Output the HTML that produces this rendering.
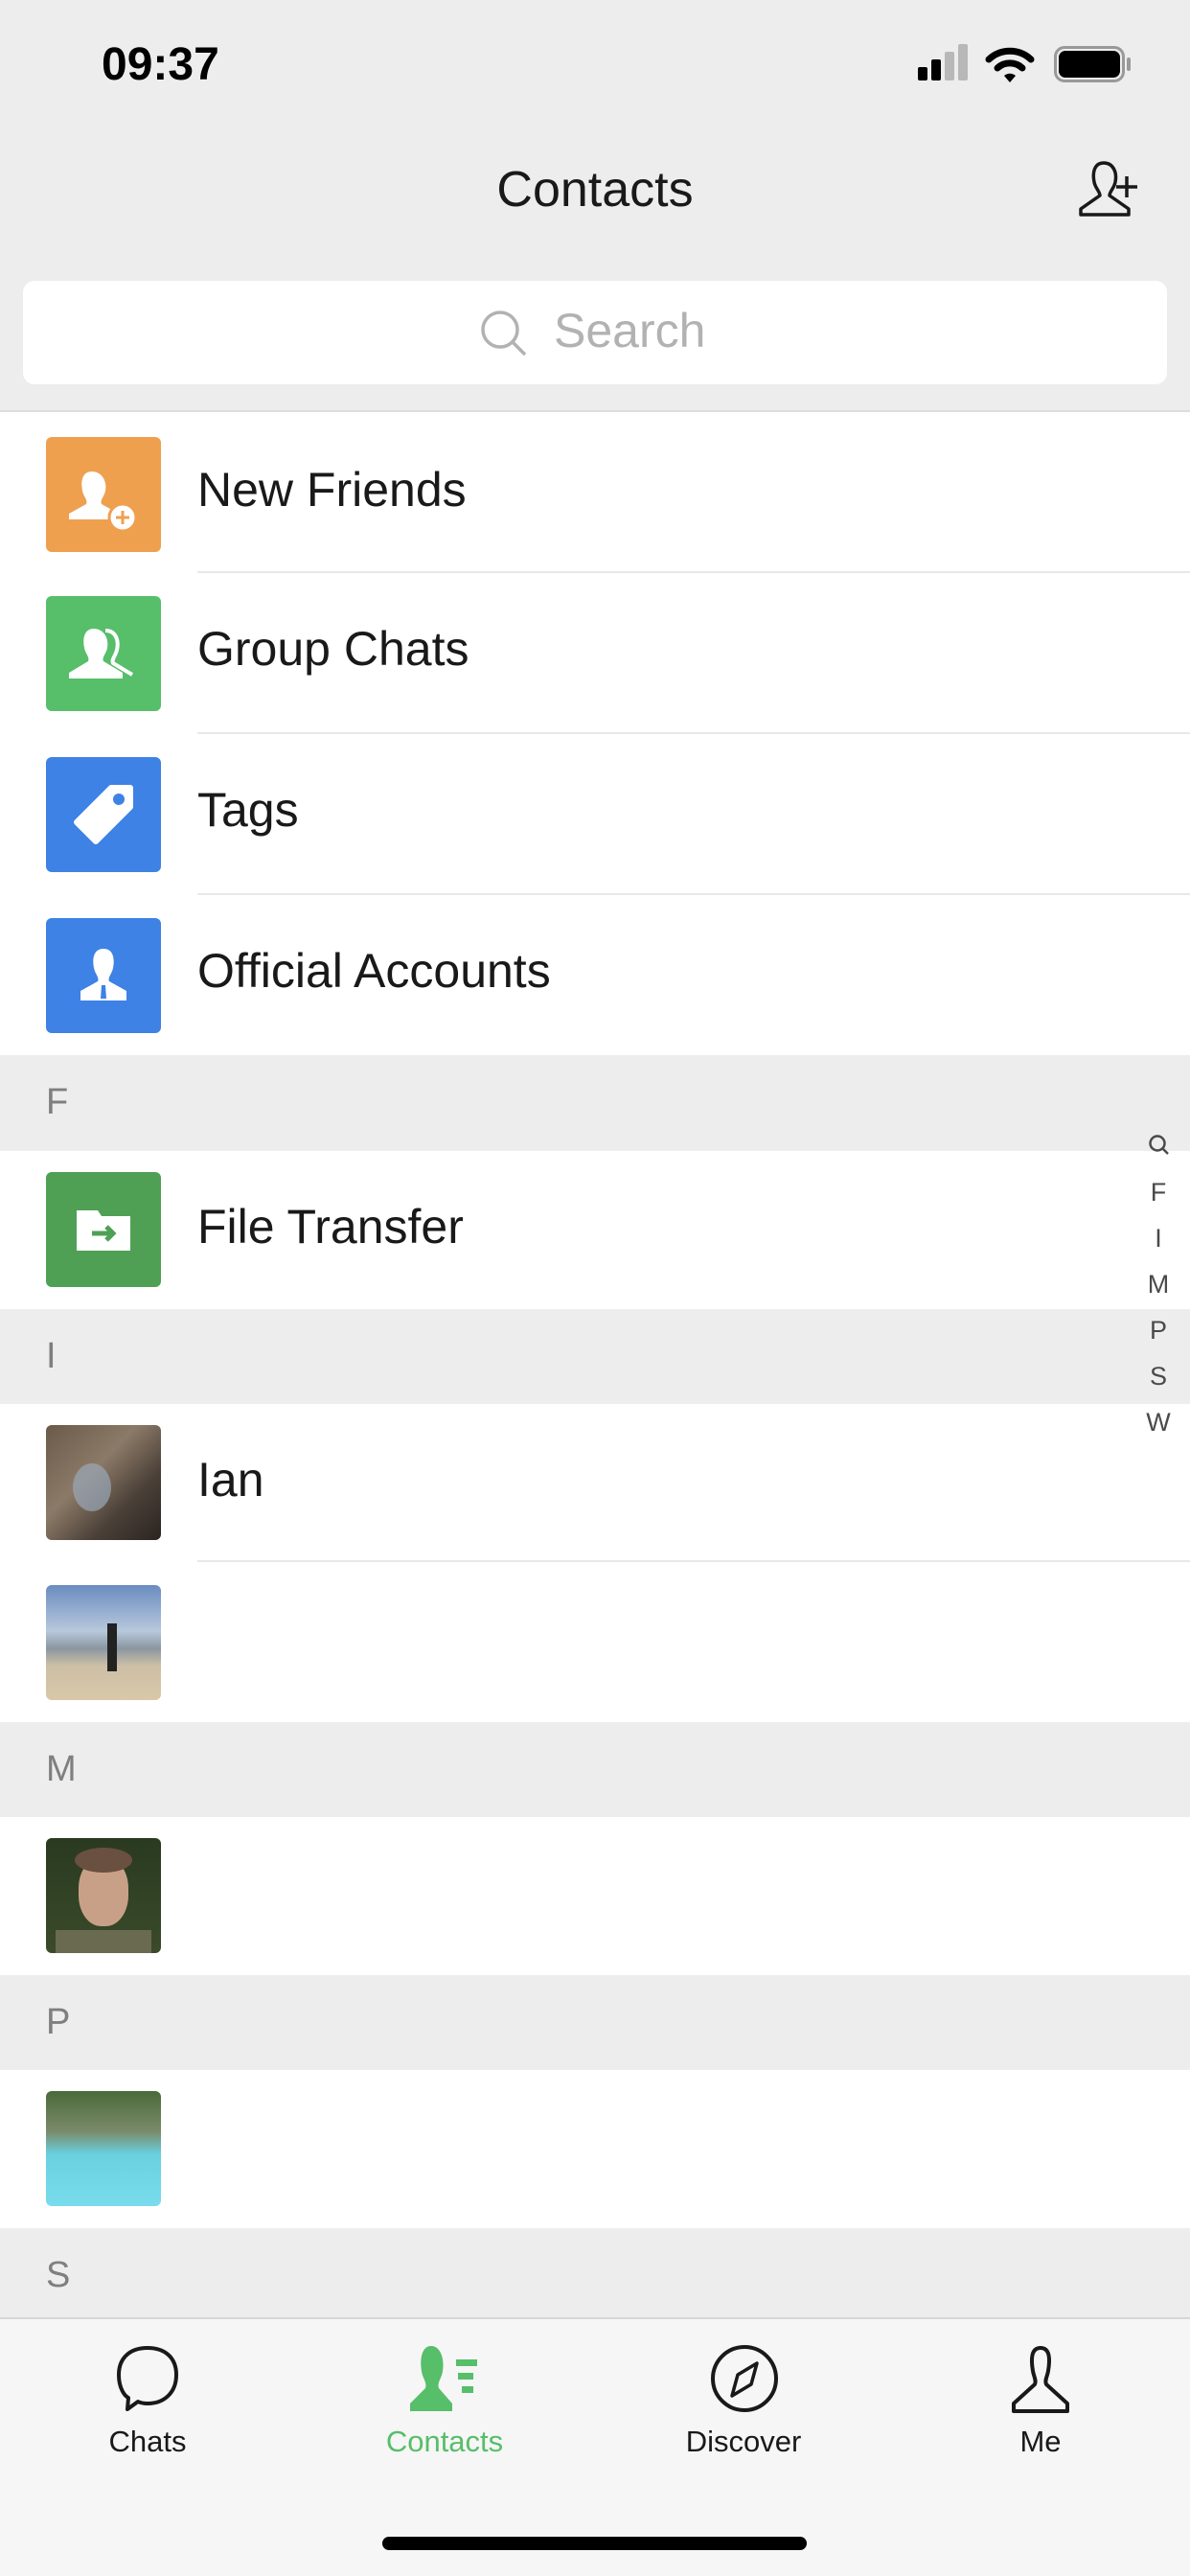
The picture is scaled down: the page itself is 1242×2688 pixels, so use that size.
<!DOCTYPE html>
<html><head><meta charset="utf-8"><style>
*{margin:0;padding:0;box-sizing:border-box}
body{width:1242px;height:2688px;overflow:hidden;background:#fff;font-family:"Liberation Sans",sans-serif;position:relative}
.abs{position:absolute}
.hdr{left:0;top:0;width:1242px;height:430px;background:#ededed;border-bottom:2px solid #dcdcdc}
.row{position:absolute;left:0;width:1242px;background:#fff}
.row .ic{position:absolute;left:48px;width:120px;height:120px;border-radius:6px;overflow:hidden}
.row .t{position:absolute;left:206px;font-size:50px;color:#191919}
.row .ln{position:absolute;left:206px;right:0;bottom:0;height:2px;background:#e8e8e8}
.sec{position:absolute;left:0;width:1242px;background:#ededed;color:#7f7f7f;font-size:38px}
.sec span{position:absolute;left:48px}
.tab{position:absolute;top:2418px;left:0;width:1242px;height:270px;background:#f6f6f6;border-top:2px solid #d6d6d6}
.tl{position:absolute;top:2530px;font-size:31px;color:#191919;width:200px;text-align:center}
.idx{position:absolute;left:1196px;width:26px;text-align:center;font-size:27px;color:#4a4a4a}
</style></head><body>
<div class="abs hdr"></div>
<div class="abs" style="left:106px;top:40px;font-size:48px;font-weight:bold;color:#000">09:37</div>
<!-- signal -->
<div class="abs" style="left:958px;top:70px;width:10px;height:14px;background:#000;border-radius:2px"></div>
<div class="abs" style="left:972px;top:62px;width:10px;height:22px;background:#000;border-radius:2px"></div>
<div class="abs" style="left:986px;top:54px;width:10px;height:30px;background:#b8b8b8;border-radius:2px"></div>
<div class="abs" style="left:1000px;top:46px;width:10px;height:38px;background:#b8b8b8;border-radius:2px"></div>
<svg class="abs" style="left:1028px;top:48px" width="52" height="40" viewBox="0 0 52 40"><path d="M4 14 A32 32 0 0 1 48 14" stroke="#000" stroke-width="7" fill="none" stroke-linecap="round"/><path d="M13 23 A19 19 0 0 1 39 23" stroke="#000" stroke-width="7" fill="none" stroke-linecap="round"/><path d="M20 31 L26 38 L32 31 A9 9 0 0 0 20 31Z" fill="#000"/></svg>
<div class="abs" style="left:1100px;top:48px;width:74px;height:38px;border:3px solid #999;border-radius:11px"></div>
<div class="abs" style="left:1105px;top:53px;width:64px;height:28px;background:#000;border-radius:7px"></div>
<div class="abs" style="left:1176px;top:60px;width:4px;height:14px;background:#999;border-radius:2px"></div>
<div class="abs" style="left:0;top:168px;width:1242px;text-align:center;font-size:52px;color:#191919">Contacts</div>
<svg class="abs" style="left:1122px;top:166px" width="72" height="64" viewBox="0 0 72 64"><path d="M30 4 C20 4 18 14 20 24 C21 30 26 34 26 38 L6 52 L6 58 L56 58 L56 52 L36 38 C36 34 41 30 42 24 C44 14 40 4 30 4Z" fill="none" stroke="#191919" stroke-width="3.5" stroke-linejoin="round"/><path d="M54 18 V40 M43 29 H65" stroke="#191919" stroke-width="3.5"/></svg>
<div class="abs" style="left:24px;top:293px;width:1194px;height:108px;background:#fff;border-radius:12px"></div>
<svg class="abs" style="left:500px;top:322px" width="52" height="52" viewBox="0 0 52 52"><circle cx="22" cy="22" r="18" fill="none" stroke="#b2b2b2" stroke-width="3.5"/><path d="M35 35 L48 48" stroke="#b2b2b2" stroke-width="3.5"/></svg>
<div class="abs" style="left:578px;top:316px;font-size:50px;color:#b2b2b2">Search</div>

<div class="row" style="top:432px;height:166px"><div class="ic" style="top:24px;background:#eea04f"><svg width="120" height="120" viewBox="0 0 120 120"><path d="M48 36 C38 36 36 46 38 56 C39 62 44 66 42 70 L24 80 L24 86 L76 86 L76 80 L58 70 C56 66 61 62 62 56 C64 46 58 36 48 36Z" fill="#fff"/><circle cx="80" cy="84" r="14" fill="#fff" stroke="#eea04f" stroke-width="3"/><path d="M80 77V91M73 84H87" stroke="#eea04f" stroke-width="3"/></svg></div><div class="t" style="top:50px">New Friends</div><div class="ln"></div></div>
<div class="row" style="top:598px;height:168px"><div class="ic" style="top:24px;background:#57be6a"><svg width="120" height="120" viewBox="0 0 120 120"><path d="M62 36 C74 36 76 48 74 56 C73 62 68 66 70 70 L90 82" fill="none" stroke="#fff" stroke-width="4"/><path d="M50 34 C40 34 38 44 40 54 C41 60 46 64 44 68 L24 80 L24 86 L80 86 L80 80 L60 68 C58 64 63 60 64 54 C66 44 60 34 50 34Z" fill="#fff"/></svg></div><div class="t" style="top:50px">Group Chats</div><div class="ln"></div></div>
<div class="row" style="top:766px;height:168px"><div class="ic" style="top:24px;background:#3d82e4"><svg width="120" height="120" viewBox="0 0 120 120"><path d="M68 32 L88 32 L88 52 L52 88 L32 68Z" fill="#fff" stroke="#fff" stroke-width="6" stroke-linejoin="round"/><circle cx="76" cy="44" r="6" fill="#3d82e4"/></svg></div><div class="t" style="top:50px">Tags</div><div class="ln"></div></div>
<div class="row" style="top:934px;height:167px"><div class="ic" style="top:24px;background:#3d82e4"><svg width="120" height="120" viewBox="0 0 120 120"><path d="M60 32 C50 32 48 42 50 52 C51 58 56 62 54 66 L36 76 L36 86 L84 86 L84 76 L66 66 C64 62 69 58 70 52 C72 42 70 32 60 32Z" fill="#fff"/><path d="M58 70 L62 70 L63 84 L57 84Z" fill="#3d82e4"/></svg></div><div class="t" style="top:50px">Official Accounts</div></div>

<div class="sec" style="top:1101px;height:100px"><span style="top:28px">F</span></div>
<div class="row" style="top:1201px;height:165px"><div class="ic" style="top:22px;background:#4fa055"><svg width="120" height="120" viewBox="0 0 120 120"><path d="M32 40 L54 40 L58 46 L88 46 L88 82 L32 82Z" fill="#fff"/><path d="M48 64 H70 M63 57 L70 64 L63 71" stroke="#4fa055" stroke-width="5" fill="none"/></svg></div><div class="t" style="top:50px">File Transfer</div></div>
<div class="sec" style="top:1366px;height:99px"><span style="top:28px">I</span></div>
<div class="row" style="top:1465px;height:165px"><div class="ic" style="top:22px;background:linear-gradient(135deg,#6a5a4a,#8c7a68 40%,#4a4038 70%,#2a2420)"><div class="abs" style="left:28px;top:40px;width:40px;height:50px;border-radius:50%;background:#9aa8b8;opacity:.7"></div></div><div class="t" style="top:50px">Ian</div><div class="ln"></div></div>
<div class="row" style="top:1630px;height:167px"><div class="ic" style="top:24px;background:linear-gradient(180deg,#6a8cc0,#b8c8dc 40%,#8a96a0 55%,#cdbfa6 70%,#d8c8a8)"><div class="abs" style="left:64px;top:40px;width:10px;height:50px;background:#222"></div></div></div>
<div class="sec" style="top:1797px;height:99px"><span style="top:28px">M</span></div>
<div class="row" style="top:1896px;height:165px"><div class="ic" style="top:22px;background:linear-gradient(180deg,#2a3a20,#3a4a2a)"><div class="abs" style="left:34px;top:20px;width:52px;height:72px;border-radius:45%;background:#c8a088"></div><div class="abs" style="left:30px;top:10px;width:60px;height:26px;border-radius:50%;background:#6a5040"></div><div class="abs" style="left:10px;top:96px;width:100px;height:30px;background:#6a6a50"></div></div></div>
<div class="sec" style="top:2061px;height:99px"><span style="top:28px">P</span></div>
<div class="row" style="top:2160px;height:165px"><div class="ic" style="top:22px;background:linear-gradient(180deg,#4a6a3a,#7a8a6a 35%,#6ad0e0 55%,#78dcec)"></div></div>
<div class="sec" style="top:2325px;height:93px"><span style="top:28px">S</span></div>

<svg class="abs" style="left:1198px;top:1183px" width="24" height="24" viewBox="0 0 24 24"><circle cx="10" cy="10" r="7.5" fill="none" stroke="#4a4a4a" stroke-width="2.5"/><path d="M15 15 L21 21" stroke="#4a4a4a" stroke-width="2.5"/></svg>
<div class="idx" style="top:1229px">F</div>
<div class="idx" style="top:1277px">I</div>
<div class="idx" style="top:1325px">M</div>
<div class="idx" style="top:1373px">P</div>
<div class="idx" style="top:1421px">S</div>
<div class="idx" style="top:1469px">W</div>

<div class="tab"></div>
<svg class="abs" style="left:118px;top:2446px" width="72" height="72" viewBox="0 0 72 72"><path d="M36 4 C16 4 6 16 6 32 C6 46 12 54 16 56 L15 68 L26 60 C30 62 34 62 36 62 C54 62 66 50 66 32 C66 14 54 4 36 4Z" fill="none" stroke="#191919" stroke-width="4" stroke-linejoin="round"/></svg>
<svg class="abs" style="left:424px;top:2446px" width="84" height="72" viewBox="0 0 84 72"><path d="M26 2 C16 2 14 16 16 28 C17 36 22 40 20 46 L4 62 L4 70 L48 70 L48 62 L34 46 C32 40 37 36 38 28 C40 16 36 2 26 2Z" fill="#57be6a"/><rect x="52" y="16" width="22" height="7" fill="#57be6a"/><rect x="54" y="30" width="16" height="7" fill="#57be6a"/><rect x="58" y="44" width="12" height="7" fill="#57be6a"/></svg>
<svg class="abs" style="left:740px;top:2444px" width="74" height="76" viewBox="0 0 74 76"><circle cx="37" cy="38" r="33" fill="none" stroke="#191919" stroke-width="4"/><path d="M50 22 L44 44 L24 56 L30 34Z" fill="none" stroke="#191919" stroke-width="3.5" stroke-linejoin="round"/></svg>
<svg class="abs" style="left:1050px;top:2446px" width="72" height="72" viewBox="0 0 72 72"><path d="M36 4 C26 4 26 16 28 28 C29 34 32 38 30 42 L8 62 L8 70 L64 70 L64 62 L42 42 C40 38 43 34 44 28 C46 16 46 4 36 4Z" fill="none" stroke="#191919" stroke-width="4" stroke-linejoin="round"/></svg>
<div class="tl" style="left:54px">Chats</div>
<div class="tl" style="left:364px;color:#57be6a">Contacts</div>
<div class="tl" style="left:676px">Discover</div>
<div class="tl" style="left:986px">Me</div>
<div class="abs" style="left:399px;top:2647px;width:443px;height:14px;border-radius:7px;background:#000"></div>
</body></html>
